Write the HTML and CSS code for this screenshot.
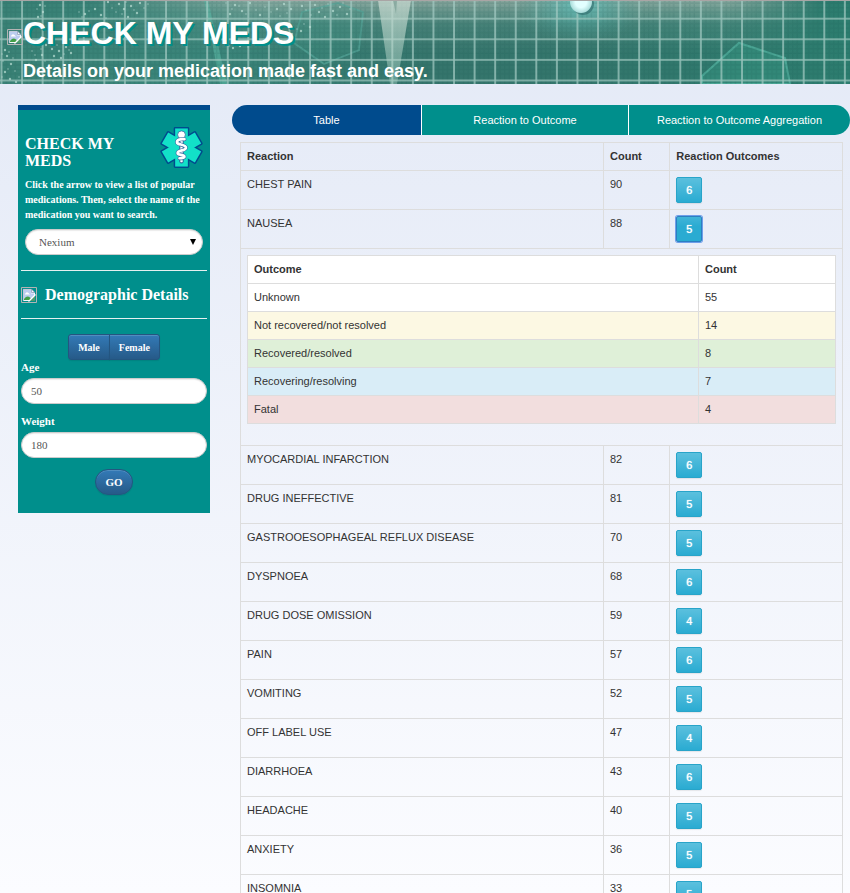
FILE: index.html
```html
<!DOCTYPE html>
<html lang="en">
<head>
<meta charset="utf-8">
<title>Check My Meds</title>
<link rel="stylesheet" href="styles.css">
</head>
<body>
<svg class="defs" width="0" height="0" aria-hidden="true">
  <symbol id="picture" viewBox="0 0 16 16">
    <path d="M.5 15.500V.5h15v15z" fill="none" stroke="#b4b4b4"/>
    <path d="M2 2h8.500L14 5.500V14H2z" fill="#f4f7fc"/>
    <path d="M3 3h7v3.500h3V9l-4 4H3z" fill="#bccdf0"/>
    <path d="M4 7q1.500-3 3.500-1l1.500 1.500H4z" fill="#fff"/>
    <path d="M3 13v-1q3-4 6-1.500L10 12l-1 1z" fill="#43a047"/>
    <path d="M14 8.500V14H8.500z" fill="#4f9a6c"/>
    <path d="M14.500 7.500l-7 7" stroke="#fff" stroke-width="1.200"/>
    <path d="M10.500 2v3.500H14" fill="none" stroke="#7f90b0" stroke-width=".7"/>
    <path d="M2.300 14V2.300h8.200L14 5.800" fill="none" stroke="#8b9bb8" stroke-width=".6"/>
  </symbol>
</svg>

<header class="banner">
  <svg class="banner-art" viewBox="0 0 850 84" preserveAspectRatio="xMinYMin slice" aria-hidden="true">
    <defs>
      <linearGradient id="base" x1="0" x2="1" y1="0" y2="0">
        <stop offset="0" stop-color="#3a8276"/><stop offset=".25" stop-color="#3a857a"/>
        <stop offset=".5" stop-color="#35756c"/><stop offset=".7" stop-color="#33766c"/><stop offset="1" stop-color="#2c7d6f"/>
      </linearGradient>
      <linearGradient id="haze" x1="0" x2="0" y1="0" y2="1">
        <stop offset="0" stop-color="#c3c8bf" stop-opacity=".62"/><stop offset=".3" stop-color="#8fb5aa" stop-opacity=".2"/><stop offset=".65" stop-color="#8fb5aa" stop-opacity="0"/>
      </linearGradient>
      <linearGradient id="fade" x1="0" x2="1" y1="0" y2="0">
        <stop offset=".1" stop-color="#000"/><stop offset=".3" stop-color="#fff"/><stop offset=".86" stop-color="#fff"/><stop offset=".97" stop-color="#000"/>
      </linearGradient>
      <mask id="middle"><rect width="850" height="84" fill="url(#fade)"/></mask>
      <radialGradient id="glow"><stop offset="0" stop-color="#65c8c4" stop-opacity=".75"/><stop offset="1" stop-color="#4aa39a" stop-opacity="0"/></radialGradient>
      <radialGradient id="ball"><stop offset=".5" stop-color="#e2ffff"/><stop offset="1" stop-color="#a9dcda"/></radialGradient>
      <linearGradient id="beam" x1="0" x2="0" y1="0" y2="1"><stop offset="0" stop-color="#c6d8cf" stop-opacity=".75"/><stop offset="1" stop-color="#b5dbcd" stop-opacity=".35"/></linearGradient>
      <pattern id="grid" x="0.500" y="17.700" width="20.570" height="20.600" patternUnits="userSpaceOnUse">
        <path d="M6 0v20.600M10.500 0v20.600M15 0v20.600M0 6h20.570M0 10.500h20.570M0 15h20.570" stroke="#174f4c" stroke-width="1.500" opacity=".13"/>
        <path d="M0 1h20.570M1 0v20.600" stroke="#a5cbc3" stroke-width="1.600" opacity=".85"/>
      </pattern>
    </defs>
    <rect width="850" height="84" fill="url(#base)"/>
    <g mask="url(#middle)"><rect width="850" height="84" fill="url(#haze)"/></g>
    <ellipse cx="580" cy="5" rx="65" ry="38" fill="url(#glow)"/>
    <path d="M302 12l36-9 25 9-4 38-35 14-30-21z" fill="#3f9485" fill-opacity=".25" stroke="#58a99c" stroke-opacity=".65" stroke-width="1.800"/>
    <path d="M702 84v-8l37-33 46 15 5 26z" fill="#369481" fill-opacity=".55" stroke="#4ba695" stroke-width="2"/>
    <path d="M204 0h4l19 84h-7z" fill="#5ab5a4" fill-opacity=".6"/>
    <rect width="850" height="84" fill="url(#grid)"/>
    <path d="M378 0h33l-14 84h-7z" fill="url(#beam)"/>
    <path d="M393 0h4l-1 14z" fill="#648d83" fill-opacity=".5"/>
    <circle cx="583" cy="4" r="11" fill="#265e60" fill-opacity=".5"/>
    <circle cx="581" cy="2" r="11" fill="url(#ball)"/>
    <g fill="none" stroke="#b8ddd3" stroke-linecap="round">
      <path stroke-width="2.400" opacity=".7" d="M108 2h0M119 4h0M124 9h0M131 6h0M85 14h0M95 9h0M101 15h0M128 17h0M140 3h0M137 13h0M235 5h0M242 11h0M230 14h0M250 3h0M260 15h0M277 9h0M284 4h0M291 9h0M302 6h0M315 5h0M319 12h0M325 17h0M340 7h0M347 14h0M333 11h0M301 31h0M292 34h0M310 27h0M233 48h0M240 46h0M40 5h0M43 12h0M38 17h0M46 45h0M52 49h0M59 51h0M66 47h0M71 53h0M61 58h0M54 56h0M42 55h0M36 60h0M5 50h0M7 56h0M11 64h0M5 72h0M10 79h0M16 82h0"/>
      <path stroke-width="1.500" opacity=".65" d="M37 9h0M41 16h0M45 6h0M112 8h0M116 12h0M122 14h0M126 2h0M134 10h0M106 18h0M89 11h0M82 17h0M79 12h0M144 8h0M148 4h0M226 3h0M232 9h0M239 6h0M246 14h0M256 10h0M265 7h0M271 12h0M280 16h0M287 13h0M306 10h0M311 15h0M322 8h0M328 4h0M337 15h0M343 3h0M350 9h0M2 54h0M9 52h0M3 61h0M13 58h0M8 69h0M2 77h0M15 71h0M19 77h0M29 64h0M35 55h0M45 61h0M49 43h0M57 45h0M64 54h0M69 50h0M75 45h0M53 61h0M41 49h0M32 51h0M304 24h0M297 29h0M236 44h0M248 47h0M229 46h0"/>
    </g>
    <path d="M0 .5h850" stroke="#a9a5a5"/>
  </svg>
  <svg class="logo" role="img" aria-label="Logo"><use href="#picture"/></svg>
  <div class="banner-text">
    <h1>CHECK MY MEDS</h1>
    <p>Details on your medication made fast and easy.</p>
  </div>
</header>

<div class="page">
  <aside class="sidebar">
    <section class="search">
      <div class="search-head">
        <h2>CHECK MY MEDS</h2>
        <svg class="star" viewBox="0 0 44 44" aria-hidden="true">
          <g fill="#004b8d" stroke="#004b8d" stroke-width="3" stroke-linejoin="round">
            <path id="arm" d="M15.500 2.500h13v39h-13z"/><use href="#arm" transform="rotate(60 22 22)"/><use href="#arm" transform="rotate(120 22 22)"/>
          </g>
          <g fill="#12e0c8">
            <path id="bar" d="M15.500 2.500h13v39h-13z"/><use href="#bar" transform="rotate(60 22 22)"/><use href="#bar" transform="rotate(120 22 22)"/>
          </g>
          <path d="M22 8v28" stroke="#31649d" stroke-width="4.500" stroke-linecap="round"/>
          <circle cx="22" cy="9" r="4" fill="#fff" stroke="#31649d" stroke-width=".8"/>
          <path d="M22 9v27" stroke="#fff" stroke-width="2.400" stroke-linecap="round"/>
          <g fill="none" stroke-linecap="round" stroke-linejoin="round">
            <path d="M25 13.500c-5-.5-8 1-7.500 3.500.5 2.500 9.500 1.500 9 5.500-.5 3-8 2-8.500 5-.5 2.500 7.500 1.500 7 4-.5 1.500-3 1.500-5 1.500" stroke="#31649d" stroke-width="4"/>
            <path d="M25 13.500c-5-.5-8 1-7.500 3.500.5 2.500 9.500 1.500 9 5.500-.5 3-8 2-8.500 5-.5 2.500 7.500 1.500 7 4-.5 1.500-3 1.500-5 1.500" stroke="#fff" stroke-width="2.800"/>
          </g>
        </svg>
      </div>
      <label class="hint" for="med">Click the arrow to view a list of popular medications. Then, select the name of the medication you want to search.</label>
      <div class="select-wrap">
        <select class="field" id="med"><option>Nexium</option></select>
      </div>
    </section>
    <div class="demo-head">
      <svg class="pic" role="img" aria-label="Demographics"><use href="#picture"/></svg>
      <h2>Demographic Details</h2>
    </div>
    <form class="demo">
      <div class="group">
        <button class="btn" type="button">Male</button><button class="btn" type="button">Female</button>
      </div>
      <label for="age">Age</label>
      <input class="field" id="age" type="text" value="50">
      <label for="weight">Weight</label>
      <input class="field" id="weight" type="text" value="180">
      <button class="btn go" type="button">GO</button>
    </form>
  </aside>

  <main class="results">
    <nav class="tabs">
      <a class="active" href="#table">Table</a>
      <a href="#reaction">Reaction to Outcome</a>
      <a href="#aggregation">Reaction to Outcome Aggregation</a>
    </nav>
    <div class="table-area" id="table">
      <table class="grid reactions">
        <colgroup><col class="c-name"><col class="c-count"><col></colgroup>
        <thead><tr><th>Reaction</th><th>Count</th><th>Reaction Outcomes</th></tr></thead>
        <tbody>
          <tr><td>CHEST PAIN</td><td>90</td><td><button class="num" type="button">6</button></td></tr>
          <tr><td>NAUSEA</td><td>88</td><td><button class="num open" type="button" aria-expanded="true">5</button></td></tr>
          <tr><td colspan="3">
            <table class="grid outcomes">
              <colgroup><col class="c-outcome"><col></colgroup>
              <thead><tr><th>Outcome</th><th>Count</th></tr></thead>
              <tbody>
                <tr><td>Unknown</td><td>55</td></tr>
                <tr class="warning"><td>Not recovered/not resolved</td><td>14</td></tr>
                <tr class="success"><td>Recovered/resolved</td><td>8</td></tr>
                <tr class="info"><td>Recovering/resolving</td><td>7</td></tr>
                <tr class="danger"><td>Fatal</td><td>4</td></tr>
              </tbody>
            </table>
          </td></tr>
          <tr><td>MYOCARDIAL INFARCTION</td><td>82</td><td><button class="num" type="button">6</button></td></tr>
          <tr><td>DRUG INEFFECTIVE</td><td>81</td><td><button class="num" type="button">5</button></td></tr>
          <tr><td>GASTROOESOPHAGEAL REFLUX DISEASE</td><td>70</td><td><button class="num" type="button">5</button></td></tr>
          <tr><td>DYSPNOEA</td><td>68</td><td><button class="num" type="button">6</button></td></tr>
          <tr><td>DRUG DOSE OMISSION</td><td>59</td><td><button class="num" type="button">4</button></td></tr>
          <tr><td>PAIN</td><td>57</td><td><button class="num" type="button">6</button></td></tr>
          <tr><td>VOMITING</td><td>52</td><td><button class="num" type="button">5</button></td></tr>
          <tr><td>OFF LABEL USE</td><td>47</td><td><button class="num" type="button">4</button></td></tr>
          <tr><td>DIARRHOEA</td><td>43</td><td><button class="num" type="button">6</button></td></tr>
          <tr><td>HEADACHE</td><td>40</td><td><button class="num" type="button">5</button></td></tr>
          <tr><td>ANXIETY</td><td>36</td><td><button class="num" type="button">5</button></td></tr>
          <tr><td>INSOMNIA</td><td>33</td><td><button class="num" type="button">5</button></td></tr>
        </tbody>
      </table>
    </div>
  </main>
</div>
</body>
</html>
```
FILE: styles.css
```css
* { box-sizing: border-box; }

body {
  margin: 0;
  height: 100vh;
  overflow: hidden;
  background: linear-gradient(#e3e9f6, #fbfcff);
  color: #333;
  font: 11px/15px "Liberation Sans", Arial, sans-serif;
}

h1, h2, p { margin: 0; }

.defs { position: absolute; }

.banner {
  position: relative;
  display: flex;
  align-items: flex-start;
  height: 84px;
  padding: 15px 7px 0;
  overflow: hidden;
  color: #fff;
}

.banner-art {
  position: absolute;
  top: 0;
  left: 0;
  width: 100%;
  height: 100%;
}

.logo, .pic {
  flex: none;
  width: 16px;
  height: 16px;
}

.logo {
  position: relative;
  margin-top: 14px;
}

.banner-text { position: relative; }

.banner h1 {
  font-size: 32px;
  line-height: 36px;
  text-shadow: 2px 2px #008f8c;
}

.banner p {
  margin-top: 9px;
  font-size: 18px;
  font-weight: bold;
  line-height: 22px;
}

.page {
  display: grid;
  grid-template-columns: 192px 1fr;
  gap: 22px;
  align-items: start;
  padding: 21px 0 0 18px;
}

.sidebar {
  padding: 0 3px 18px;
  border-top: 5px solid #004b8d;
  background: #008f8c;
  color: #fff;
  font-family: "Liberation Serif", "Times New Roman", serif;
}

.search {
  padding: 16px 4px 15px;
  border-bottom: 1px solid #e6f0f0;
}

.search-head {
  display: flex;
  justify-content: space-between;
}

.sidebar h2 {
  font-size: 16px;
  line-height: 17px;
}

.search h2 {
  width: 100px;
  margin-top: 9px;
}

.star {
  width: 43px;
  height: 43px;
}

.sidebar label {
  display: block;
  font-weight: bold;
}

.search .hint {
  margin: 8px 0 7px;
  font-size: 10px;
}

.field {
  display: block;
  width: 100%;
  height: 26px;
  padding: 0 9px;
  border: 1px solid #ccc;
  border-radius: 13px;
  background: #fff;
  color: #555;
  font: inherit;
  box-shadow: inset 0 1px 1px rgba(0, 0, 0, 0.08);
}

.select-wrap { position: relative; }

.select-wrap .field {
  padding: 0 13px;
  appearance: none;
}

.select-wrap::after {
  content: "";
  position: absolute;
  top: 10px;
  right: 7px;
  border: 3px solid transparent;
  border-top: 6px solid #000;
  border-bottom: 0;
}

.demo-head {
  display: flex;
  gap: 8px;
  align-items: center;
  height: 48px;
  border-bottom: 1px solid #e6f0f0;
}

.demo {
  display: flex;
  flex-direction: column;
  padding-top: 15px;
}

.demo label { line-height: 15px; }

.demo .field { margin: 3px 0 10px; }

.group {
  display: flex;
  align-self: center;
}

.btn {
  height: 26px;
  padding: 0 9px;
  border: 1px solid #245580;
  border-radius: 3px;
  background: linear-gradient(#337ab7, #265a88);
  color: #fff;
  font: bold 11px/15px "Liberation Serif", "Times New Roman", serif;
  box-shadow: inset 0 1px 0 rgba(255, 255, 255, 0.15), 0 1px 1px rgba(0, 0, 0, 0.08);
}

.group .btn { font-size: 10px; }

.group .btn:first-child { border-radius: 3px 0 0 3px; }

.group .btn:last-child {
  margin-left: -1px;
  border-radius: 0 3px 3px 0;
}

.btn.go {
  align-self: center;
  margin-top: 1px;
  border-radius: 13px;
}

.tabs {
  display: grid;
  grid-template-columns: 189fr 207fr 222fr;
  overflow: hidden;
  border-radius: 15px;
}

.tabs a {
  padding: 8px 0 7px;
  background: #008f8c;
  color: #fff;
  text-align: center;
  text-decoration: none;
}

.tabs a + a { border-left: 1px solid #fff; }

.tabs .active { background: #004b8d; }

.table-area { padding: 7px 7px 0 8px; }

.grid {
  width: 100%;
  border-collapse: collapse;
  table-layout: fixed;
}

.grid th, .grid td {
  padding: 6px;
  border: 1px solid #ddd;
  text-align: left;
  vertical-align: top;
}

.c-name { width: 60.3%; }
.c-count { width: 11%; }
.c-outcome { width: 76.7%; }

.outcomes {
  margin-bottom: 15px;
  background: #fff;
}

.warning { background: #fcf8e3; }
.success { background: #dff0d8; }
.info { background: #d9edf7; }
.danger { background: #f2dede; }

.num {
  display: block;
  width: 26px;
  height: 26px;
  padding: 0;
  border: 1px solid #28a4c9;
  border-radius: 2px;
  background: linear-gradient(#5bc0de, #2aabd2);
  color: #fff;
  font: inherit;
  text-shadow: 0 0 1px #fff;
  box-shadow: 0 1px 1px rgba(0, 0, 0, 0.08);
}

.num.open {
  border-color: #2d7fc0;
  background: linear-gradient(#41b4d8, #2aabd2 40%);
  box-shadow: 0 0 0 1px #6f9fea;
}
```
